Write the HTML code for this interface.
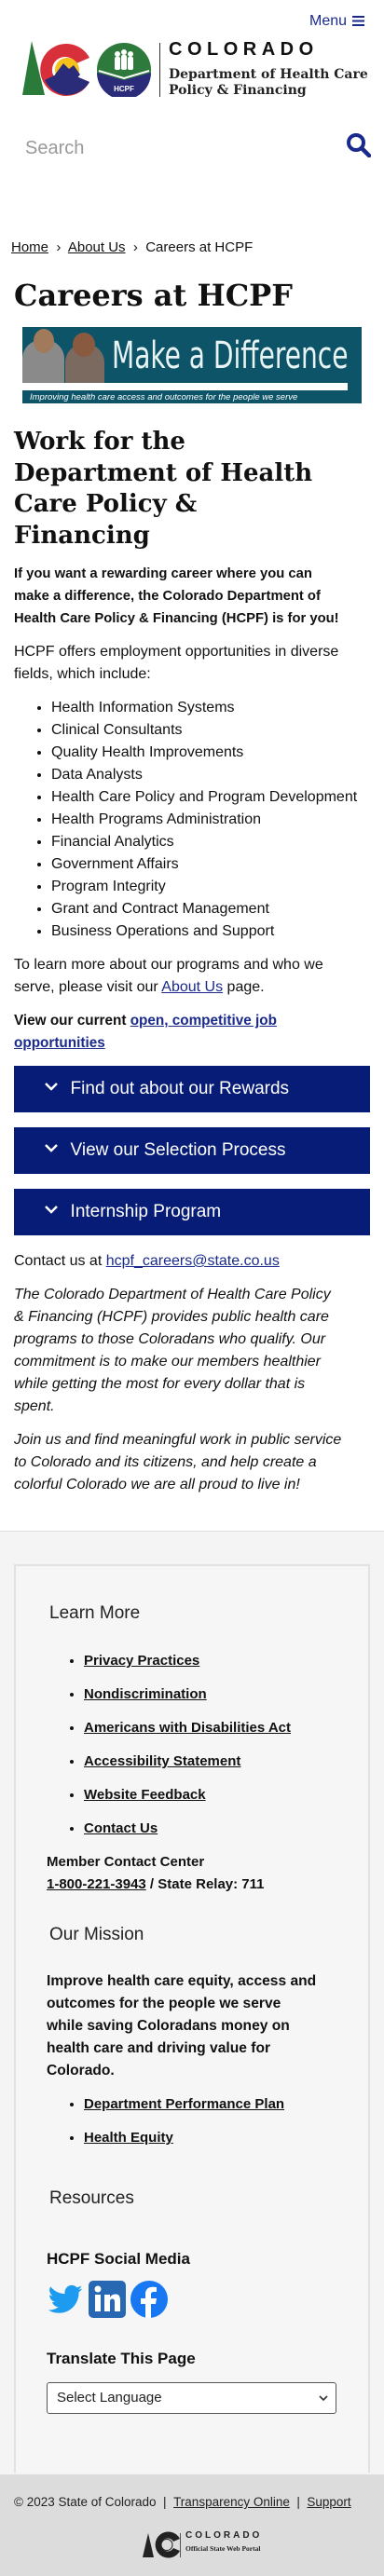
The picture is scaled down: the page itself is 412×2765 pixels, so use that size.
<!DOCTYPE html>
<html><head><meta charset="utf-8">
<style>
*{margin:0;padding:0;box-sizing:border-box}
body{width:412px;height:2765px;position:relative;background:#fff;font-family:"Liberation Sans","DejaVu Sans",sans-serif;color:#111;overflow:hidden}
.a{position:absolute;white-space:nowrap}
a{color:#111;text-decoration:underline}
.nv{color:#1a2a8c}
.sl{font-family:"DejaVu Serif","Liberation Serif",serif;font-weight:bold}
.p{font-size:15px;line-height:24px}
ul.l{list-style:disc;position:absolute;left:55px}
.acc{position:absolute;left:15px;width:382px;height:50px;background:#061c77;color:#fff;font-size:19px;line-height:50px;padding-left:50px}
.acc svg{position:absolute;left:33px;top:18px}
.fl li{height:36px;line-height:24px;font-size:15px;font-weight:bold}
.h3{font-size:19px;color:#222}
</style></head><body>

<div class="a nv" style="left:332px;top:14px;font-size:16px">Menu</div>
<svg class="a" style="left:378px;top:17px" width="13" height="11"><rect y="0" width="13" height="2" fill="#1a2a8c"/><rect y="4.5" width="13" height="2" fill="#1a2a8c"/><rect y="9" width="13" height="2" fill="#1a2a8c"/></svg>

<svg class="a" style="left:24px;top:44px" width="76" height="62" viewBox="0 0 76 62">
<polygon points="0,58 10,0 24,58" fill="#2a7a3a"/>
<path d="M72,18 A28,28 0 1 0 72,44 L58,38 A14,14 0 1 1 58,24 Z" fill="#d8303a"/>
<path d="M48,58 A28,28 0 0 1 24,42 L40,34 A14,14 0 0 0 58,38 L72,44 A28,28 0 0 1 48,58Z" fill="#2a2c7a"/>
<circle cx="48" cy="31" r="13" fill="#f4c21b"/>
<polygon points="35,36 44,24 50,30 55,26 62,36 55,44 40,44" fill="#2a2c7a"/>
</svg>
<svg class="a" style="left:104px;top:46px" width="58" height="58" viewBox="0 0 58 58">
<circle cx="29" cy="29" r="29" fill="#2e7a3c"/>
<path d="M0,32 L29,40 L58,32 A29,29 0 0 1 0,32Z" fill="#2a2c7a"/>
<path d="M2,30 L29,38 L56,30" stroke="#fff" stroke-width="2" fill="none"/>
<g fill="#fff"><circle cx="22" cy="12" r="3"/><circle cx="29" cy="10" r="3"/><circle cx="36" cy="12" r="3"/><rect x="19" y="15" width="6" height="14" rx="2"/><rect x="26" y="13" width="6" height="16" rx="2"/><rect x="33" y="15" width="6" height="14" rx="2"/></g>
<text x="29" y="52" font-size="8" font-weight="bold" fill="#fff" text-anchor="middle" font-family="Liberation Sans">HCPF</text>
</svg>
<div class="a" style="left:171px;top:46px;width:1px;height:58px;background:#333"></div>
<div class="a" style="left:181px;top:42px;font-size:20px;font-weight:bold;letter-spacing:5.5px">COLORADO</div>
<div class="a sl" style="left:181px;top:72px;font-size:14px;line-height:17px;font-weight:bold;color:#222">Department of Health Care<br>Policy &amp; Financing</div>

<div class="a" style="left:27px;top:148px;font-size:20px;color:#999">Search</div>
<svg class="a" style="left:371px;top:142px" width="27" height="27" viewBox="0 0 27 27"><circle cx="11" cy="11" r="8" stroke="#1a2a8c" stroke-width="4" fill="none"/><line x1="17" y1="17" x2="25" y2="25" stroke="#1a2a8c" stroke-width="4.5" stroke-linecap="round"/></svg>

<div class="a" style="left:12px;top:257px;font-size:15px"><a href="#">Home</a> &nbsp;›&nbsp; <a href="#">About Us</a> &nbsp;›&nbsp; Careers at HCPF</div>

<div class="a sl" style="left:15px;top:298px;font-size:32px">Careers at HCPF</div>

<div class="a" style="left:24px;top:351px;width:364px;height:82px;background:#0d5468;overflow:hidden">
<div class="a" style="left:0;top:14px;width:45px;height:46px;background:#8a8a8a;border-radius:20px 20px 0 0"></div>
<div class="a" style="left:12px;top:2px;width:22px;height:26px;background:#a07a5a;border-radius:50%"></div>
<div class="a" style="left:46px;top:18px;width:42px;height:42px;background:#7a6a60;border-radius:20px 20px 0 0"></div>
<div class="a" style="left:54px;top:6px;width:24px;height:26px;background:#8a5a40;border-radius:50%"></div>
<div class="a" style="left:96px;top:8px;font-size:40px;color:#e8f4f4;transform:scaleX(.78);transform-origin:left;font-family:'DejaVu Sans Condensed','DejaVu Sans',sans-serif">Make a Difference</div>
<div class="a" style="left:0;top:60px;width:349px;height:8px;background:#fff"></div>
<div class="a" style="left:8px;top:70px;font-size:9.5px;font-style:italic;color:#fff">Improving health care access and outcomes for the people we serve</div>
</div>

<div class="a sl" style="left:15px;top:458px;font-size:26px;line-height:33.5px">Work for the<br>Department of Health<br>Care Policy &amp;<br>Financing</div>

<div class="a p" style="left:15px;top:604px;font-weight:bold;font-size:14.8px">If you want a rewarding career where you can<br>make a difference, the Colorado Department of<br>Health Care Policy &amp; Financing (HCPF) is for you!</div>
<div class="a p" style="left:15px;top:688px;font-size:16px">HCPF offers employment opportunities in diverse<br>fields, which include:</div>
<ul class="l p" style="top:748px;font-size:16px">
<li>Health Information Systems</li><li>Clinical Consultants</li><li>Quality Health Improvements</li><li>Data Analysts</li><li>Health Care Policy and Program Development</li><li>Health Programs Administration</li><li>Financial Analytics</li><li>Government Affairs</li><li>Program Integrity</li><li>Grant and Contract Management</li><li>Business Operations and Support</li></ul>
<div class="a p" style="left:15px;top:1024px;font-size:16px">To learn more about our programs and who we<br>serve, please visit our <a class="nv" href="#">About Us</a> page.</div>
<div class="a p" style="left:15px;top:1084px;font-weight:bold;font-size:15.3px">View our current <a class="nv" href="#">open, competitive job<br>opportunities</a></div>

<div class="acc" style="top:1144px"><svg width="14" height="9"><path d="M1,1 L7,7 L13,1" stroke="#fff" stroke-width="2.5" fill="none"/></svg>&nbsp;&nbsp;Find out about our Rewards</div>
<div class="acc" style="top:1210px"><svg width="14" height="9"><path d="M1,1 L7,7 L13,1" stroke="#fff" stroke-width="2.5" fill="none"/></svg>&nbsp;&nbsp;View our Selection Process</div>
<div class="acc" style="top:1276px"><svg width="14" height="9"><path d="M1,1 L7,7 L13,1" stroke="#fff" stroke-width="2.5" fill="none"/></svg>&nbsp;&nbsp;Internship Program</div>

<div class="a p" style="left:15px;top:1342px;font-size:16px">Contact us at <a class="nv" href="#">hcpf_careers@state.co.us</a></div>
<div class="a p" style="left:15px;top:1378px;font-style:italic;font-size:16px">The Colorado Department of Health Care Policy<br>&amp; Financing (HCPF) provides public health care<br>programs to those Coloradans who qualify. Our<br>commitment is to make our members healthier<br>while getting the most for every dollar that is<br>spent.</div>
<div class="a p" style="left:15px;top:1534px;font-style:italic;font-size:16px">Join us and find meaningful work in public service<br>to Colorado and its citizens, and help create a<br>colorful Colorado we are all proud to live in!</div>

<div class="a" style="left:0;top:1643px;width:412px;height:1013px;background:#f4f4f4;border-top:1px solid #ddd"></div>
<div class="a" style="left:15px;top:1679px;width:382px;height:975px;border:2px solid #e2e2e2;border-bottom:none;background:#f6f6f6"></div>

<div class="a h3" style="left:53px;top:1721px">Learn More</div>
<ul class="l fl" style="top:1771px;left:90px">
<li><a href="#">Privacy Practices</a></li><li><a href="#">Nondiscrimination</a></li><li><a href="#">Americans with Disabilities Act</a></li><li><a href="#">Accessibility Statement</a></li><li><a href="#">Website Feedback</a></li><li><a href="#">Contact Us</a></li></ul>
<div class="a p" style="left:50px;top:1987px;font-weight:bold">Member Contact Center<br><a href="#">1-800-221-3943</a> / State Relay: 711</div>
<div class="a h3" style="left:53px;top:2066px">Our Mission</div>
<div class="a p" style="left:50px;top:2115px;font-weight:bold;font-size:15.6px">Improve health care equity, access and<br>outcomes for the people we serve<br>while saving Coloradans money on<br>health care and driving value for<br>Colorado.</div>
<ul class="l fl" style="top:2247px;left:90px">
<li><a href="#">Department Performance Plan</a></li><li><a href="#">Health Equity</a></li></ul>
<div class="a h3" style="left:53px;top:2349px">Resources</div>
<div class="a" style="left:50px;top:2415px;font-size:17px;font-weight:bold">HCPF Social Media</div>
<svg class="a" style="left:50px;top:2448px" width="40" height="40" viewBox="0 0 24 24"><path fill="#1d9bf0" d="M23 5.1a9 9 0 0 1-2.6.7 4.5 4.5 0 0 0 2-2.5 9 9 0 0 1-2.9 1.1A4.5 4.5 0 0 0 11.8 8.5 12.8 12.8 0 0 1 2.5 3.8a4.5 4.5 0 0 0 1.4 6 4.5 4.5 0 0 1-2-.6v.1a4.5 4.5 0 0 0 3.6 4.4 4.5 4.5 0 0 1-2 .1 4.5 4.5 0 0 0 4.2 3.1A9 9 0 0 1 1 18.8a12.8 12.8 0 0 0 6.9 2c8.3 0 12.8-6.9 12.8-12.8v-.6A9 9 0 0 0 23 5.1z"/></svg>
<svg class="a" style="left:95px;top:2448px" width="40" height="40" viewBox="0 0 40 40"><rect width="40" height="40" rx="5" fill="#2867b2"/><rect x="7" y="15" width="6" height="18" fill="#fff"/><circle cx="10" cy="9" r="3.5" fill="#fff"/><path d="M17 15h6v3c1-2 3-3.5 6-3.5 4 0 5 3 5 7V33h-6v-10c0-2-.5-3.5-2.5-3.5S23 21 23 23v10h-6z" fill="#fff"/></svg>
<svg class="a" style="left:140px;top:2448px" width="40" height="40" viewBox="0 0 40 40"><circle cx="20" cy="20" r="20" fill="#1877f2"/><path d="M22 40V25h5l1-6h-6v-4c0-2 .7-3 3-3h3V7c-1 0-2.5-.3-4.5-.3-4.5 0-7.5 2.7-7.5 7.7V19h-5v6h5v15z" fill="#fff"/></svg>
<div class="a" style="left:50px;top:2522px;font-size:17px;font-weight:bold">Translate This Page</div>
<div class="a" style="left:50px;top:2557px;width:311px;height:34px;border:1px solid #555;border-radius:3px;background:#fff;font-size:15px;line-height:32px;padding-left:10px;color:#222">Select Language
<svg class="a" style="left:291px;top:13px" width="10" height="7"><path d="M1,1 L5,5 L9,1" stroke="#333" stroke-width="1.6" fill="none"/></svg></div>

<div class="a" style="left:0;top:2656px;width:412px;height:109px;background:#dcdcdc"></div>
<div class="a" style="left:15px;top:2678px;font-size:13.5px;color:#222">© 2023 State of Colorado &nbsp;| &nbsp;<a href="#" style="color:#222">Transparency Online</a> &nbsp;| &nbsp;<a href="#" style="color:#222">Support</a></div>
<svg class="a" style="left:153px;top:2717px" width="42" height="29" viewBox="0 0 42 29"><polygon points="0,28 6,2 12,28" fill="#222"/><path d="M40,8 A14,14 0 1 0 40,21 L33,18 A7,7 0 1 1 33,11Z" fill="#222"/><circle cx="26" cy="14.5" r="6" fill="none" stroke="#222"/></svg>
<div class="a" style="left:193px;top:2719px;width:1px;height:26px;background:#555"></div>
<div class="a" style="left:199px;top:2716px;font-size:10px;font-weight:bold;letter-spacing:3px;color:#222">COLORADO</div>
<div class="a" style="left:199px;top:2731px;font-size:7.5px;font-weight:bold;font-family:'Liberation Serif',serif;color:#222">Official State Web Portal</div>
</body></html>
